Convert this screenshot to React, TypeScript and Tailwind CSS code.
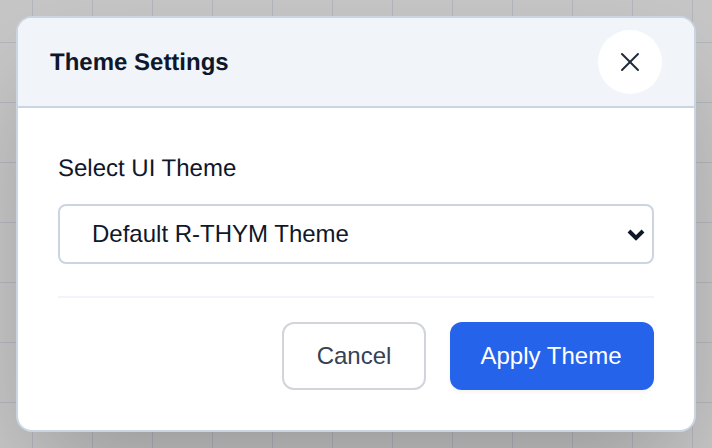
import {X} from 'lucide-react'

export default function App() {
  return (
    <div className="flex items-center justify-center w-full h-[448px] overflow-hidden bg-[#c6c6c7] bg-[linear-gradient(to_right,#b2b5bb_1px,transparent_1px),linear-gradient(to_bottom,#b2b5bb_1px,transparent_1px)] bg-[size:60px_60px] bg-[position:32px_42px] font-['Liberation_Sans',Arial,sans-serif] [text-rendering:geometricPrecision]">
      <div className="flex flex-col w-[680px] h-[416px] overflow-hidden bg-white border-2 border-[#cbd5e1] rounded-2xl shadow-[0_50px_100px_-24px_rgba(0,0,0,0.25)]">
        {/* header */}
        <div className="flex items-center justify-between px-8 py-3 bg-[#f1f5f9] border-b-2 border-[#cbd5e1]">
          <h2 className="mt-0.5 text-2xl font-bold text-[#0f172a]">Theme Settings</h2>
          <button className="flex items-center justify-center w-16 h-16 bg-white rounded-full text-[#1e293b]">
            <X className="w-8 h-8" strokeWidth={1.5} />
          </button>
        </div>
        {/* body */}
        <div className="flex flex-col px-10 pt-[45px] pb-10">
          <label className="mb-[19px] text-2xl text-[#0f172a]">Select UI Theme</label>
          <div className="relative">
            <select className="w-full h-[60px] pl-8 pr-10 text-2xl bg-white border-2 border-[#cbd5e1] rounded-lg appearance-none text-[#0f172a]">
              <option>Default R-THYM Theme</option>
            </select>
            <svg className="absolute right-[9px] top-6 w-[18px] h-[13px] text-[#0f172a] pointer-events-none" viewBox="0 0 18 13" fill="none">
              <path d="M2 3l7 7 7-7" stroke="currentColor" strokeWidth="4" />
            </svg>
          </div>
          <div className="flex justify-end gap-6 pt-6 mt-8 border-t-2 border-[#f1f5f9]">
            <button className="w-36 h-[68px] text-2xl bg-white border-2 border-[#d1d5db] rounded-xl text-[#374151]">
              Cancel
            </button>
            <button className="w-[204px] h-[68px] pr-0.5 text-2xl text-white bg-[#2563eb] rounded-xl shadow-[0_2px_4px_rgba(0,0,0,0.05)]">
              Apply Theme
            </button>
          </div>
        </div>
      </div>
    </div>
  )
}
